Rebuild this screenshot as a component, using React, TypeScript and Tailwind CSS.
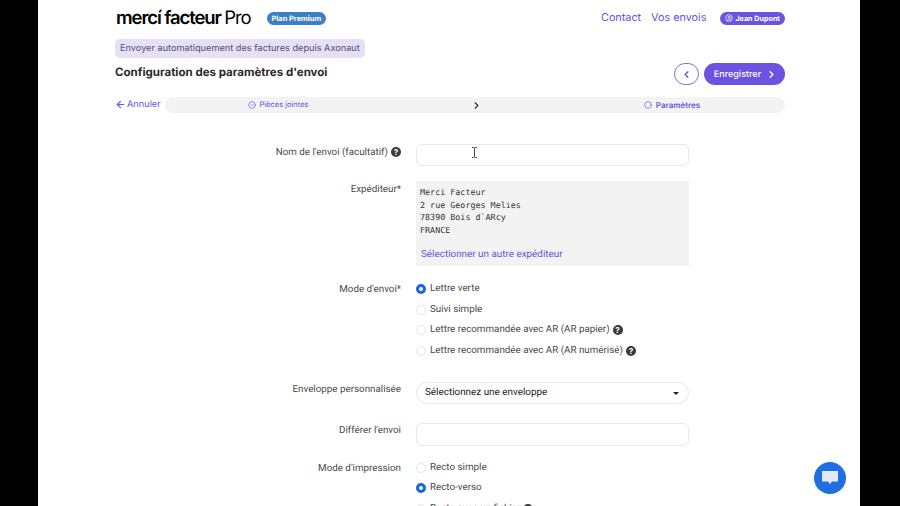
import { ArrowLeft, ChevronLeft, ChevronRight, Circle, CircleCheck, CircleUser } from "lucide-react";

const purple = "text-[#6c52e0]";

function Help() {
  return (
    <span className="grid h-[10px] w-[10px] place-items-center rounded-full bg-[#3a3a3c] font-['Inter',sans-serif] text-[8px] font-bold leading-none text-white">
      ?
    </span>
  );
}

function Radio({ label, checked, help }: { label: string; checked?: boolean; help?: boolean }) {
  return (
    <div className="flex h-[20.5px] items-center">
      {checked ? (
        <span className="h-[10px] w-[10px] rounded-full border-[3px] border-[#1a66e0] bg-white" />
      ) : (
        <span className="h-[10px] w-[10px] rounded-full border border-[#e4e4e4] bg-white" />
      )}
      <span className="ml-[4px] mr-[3px] pt-[1px] font-['Roboto',sans-serif] text-[9.8px] text-[#4a4a4a]">{label}</span>
      {help && <Help />}
    </div>
  );
}

function Row({ label, help, className, children }: { label: string; help?: boolean; className?: string; children: React.ReactNode }) {
  return (
    <div className={`flex ${className ?? ""}`}>
      <div className="flex w-[301px] items-start justify-end gap-[3px] pr-[15px] font-['Roboto',sans-serif] text-[9.8px] leading-[16px] text-[#4a4a4a]">
        {label}
        {help && <span className="mt-[2px]"><Help /></span>}
      </div>
      <div className="w-[273px]">{children}</div>
    </div>
  );
}

export default function App() {
  return (
    <div className="flex h-[506px] w-[900px] overflow-hidden bg-black font-['Inter',sans-serif] [text-rendering:geometricPrecision]">
      <div className="relative ml-[38px] h-[506px] w-[822px] bg-white">
        <div className="flex w-full flex-col pl-[77px] pr-[75px]">
          <header className="flex h-[39px] items-center justify-between pb-[3px]">
            <div className="flex items-center gap-[16px]">
              <span className="ml-[1px] mt-[1px] text-[18.5px] font-semibold leading-none tracking-[-1.1px] text-black">
                mercí facteur <span className="font-normal">Pro</span>
              </span>
              <span className="rounded-full bg-[#3b7fc4] px-[5px] py-[2px] text-[7.4px] font-bold leading-[9px] text-white">
                Plan Premium
              </span>
            </div>
            <div className="flex items-center gap-[10px]">
              <span className={`text-[10.8px] leading-[14px] ${purple}`}>Contact</span>
              <span className={`mr-[4px] text-[10.8px] leading-[14px] ${purple}`}>Vos envois</span>
              <span className="flex items-center gap-[2px] rounded-full bg-[#6c52e0] px-[5px] py-[2px] text-[7.2px] font-bold leading-[9px] text-white">
                <CircleUser size={8} />
                Jean Dupont
              </span>
            </div>
          </header>
          <div className="w-fit rounded-[5px] bg-[#e5e0f5] px-[5px] py-[3px] text-[9.2px] leading-[13px] text-[#55506a]">
            Envoyer automatiquement des factures depuis Axonaut
          </div>
          <div className="flex items-start justify-between">
            <h1 className="mt-[6px] text-[11.5px] font-bold leading-[16px] text-[#2b2b2b]">Configuration des paramètres d'envoi</h1>
            <div className="mt-[5px] flex items-center gap-[5px]">
              <span className="grid h-[22px] w-[25px] place-items-center rounded-full border border-[#7f73c9] bg-white text-[#6c52e0]">
                <ChevronLeft size={11} strokeWidth={3} />
              </span>
              <span className="flex h-[22px] w-[81px] items-center justify-center gap-[5px] rounded-full bg-[#6c52e0] pl-[2px] pt-[1px] text-[9px] font-medium text-white">
                Enregistrer
                <ChevronRight size={11} strokeWidth={3} />
              </span>
            </div>
          </div>
          <div className="mt-[12px] flex h-[16px] items-center">
            <span className={`flex w-[50px] items-center gap-[1px] text-[9.2px] ${purple}`}>
              <ArrowLeft size={11} strokeWidth={2.5} />
              Annuler
            </span>
            <div className="flex h-[16px] flex-1 items-center rounded-full bg-[#f3f3f3] text-[7.5px]">
              <span className={`flex w-[226px] items-center justify-center gap-[4px] ${purple}`}>
                <CircleCheck size={8} />
                Pièces jointes
              </span>
              <ChevronRight size={11} strokeWidth={2.5} className="ml-[80px] text-[#333]" />
              <span className={`ml-[77px] flex w-[226px] items-center justify-center gap-[4px] text-[8px] font-semibold ${purple}`}>
                <Circle size={8} />
                Paramètres
              </span>
            </div>
          </div>
          <div className="mt-[32px] flex flex-col">
            <Row label="Nom de l'envoi (facultatif)" help className="h-[37px]">
              <div className="mt-[-1px] h-[22px] rounded-[6px] border border-[#e8e8e8] bg-white" />
            </Row>
            <Row label="Expéditeur*" className="h-[100px]">
              <div className="mt-[-1px] h-[85px] bg-[#f3f3f3] px-[4px] pt-[5px]">
                <pre className="font-['DejaVu_Sans_Mono',monospace] text-[8.4px] leading-[12.6px] text-[#333]">{"Merci Facteur\n2 rue Georges Melies\n78390 Bois d`ARcy\nFRANCE"}</pre>
                <div className={`ml-[1px] mt-[12px] font-['Roboto',sans-serif] text-[9.9px] leading-[14px] ${purple}`}>Sélectionner un autre expéditeur</div>
              </div>
            </Row>
            <Row label="Mode d'envoi*" className="h-[100px]">
              <div className="mt-[-3px]">
                <Radio label="Lettre verte" checked />
                <Radio label="Suivi simple" />
                <Radio label="Lettre recommandée avec AR (AR papier)" help />
                <Radio label="Lettre recommandée avec AR (AR numérisé)" help />
              </div>
            </Row>
            <Row label="Enveloppe personnalisée" className="h-[41px]">
              <div className="flex h-[22px] items-center justify-between rounded-full border border-[#e8e8e8] bg-white pl-[8px] pr-[9px] pt-[1px] font-['Roboto',sans-serif] text-[9.9px] text-[#222]">
                Sélectionnez une enveloppe
                <span className="h-0 w-0 border-x-[3px] border-t-[3.5px] border-x-transparent border-t-[#222]" />
              </div>
            </Row>
            <Row label="Différer l'envoi" className="h-[38px]">
              <div className="h-[23px] rounded-[6px] border border-[#e8e8e8] bg-white" />
            </Row>
            <Row label="Mode d'impression">
              <div className="mt-[-3.5px]">
                <Radio label="Recto simple" />
                <Radio label="Recto-verso" checked />
                <Radio label="Recto avec un fichier" help />
              </div>
            </Row>
          </div>
        </div>
        <div className="absolute left-[776px] top-[462px] grid h-[32px] w-[32px] place-items-center rounded-full bg-[#1f6fe0]">
          <svg width="18" height="16" viewBox="0 0 18 16">
            <path d="M1 1h16v10.5h-6L9 14l-2-2.5H1z" fill="#e3e9f7" />
          </svg>
        </div>
        <svg className="absolute left-[433px] top-[147px]" width="7" height="11" viewBox="0 0 7 11" fill="none" stroke="#444" strokeWidth="1">
          <path d="M1 .5h1.5L3.5 1l1-.5H6M3.5 1v9M1 10.5h1.5l1-.5 1 .5H6" />
        </svg>
      </div>
    </div>
  );
}
